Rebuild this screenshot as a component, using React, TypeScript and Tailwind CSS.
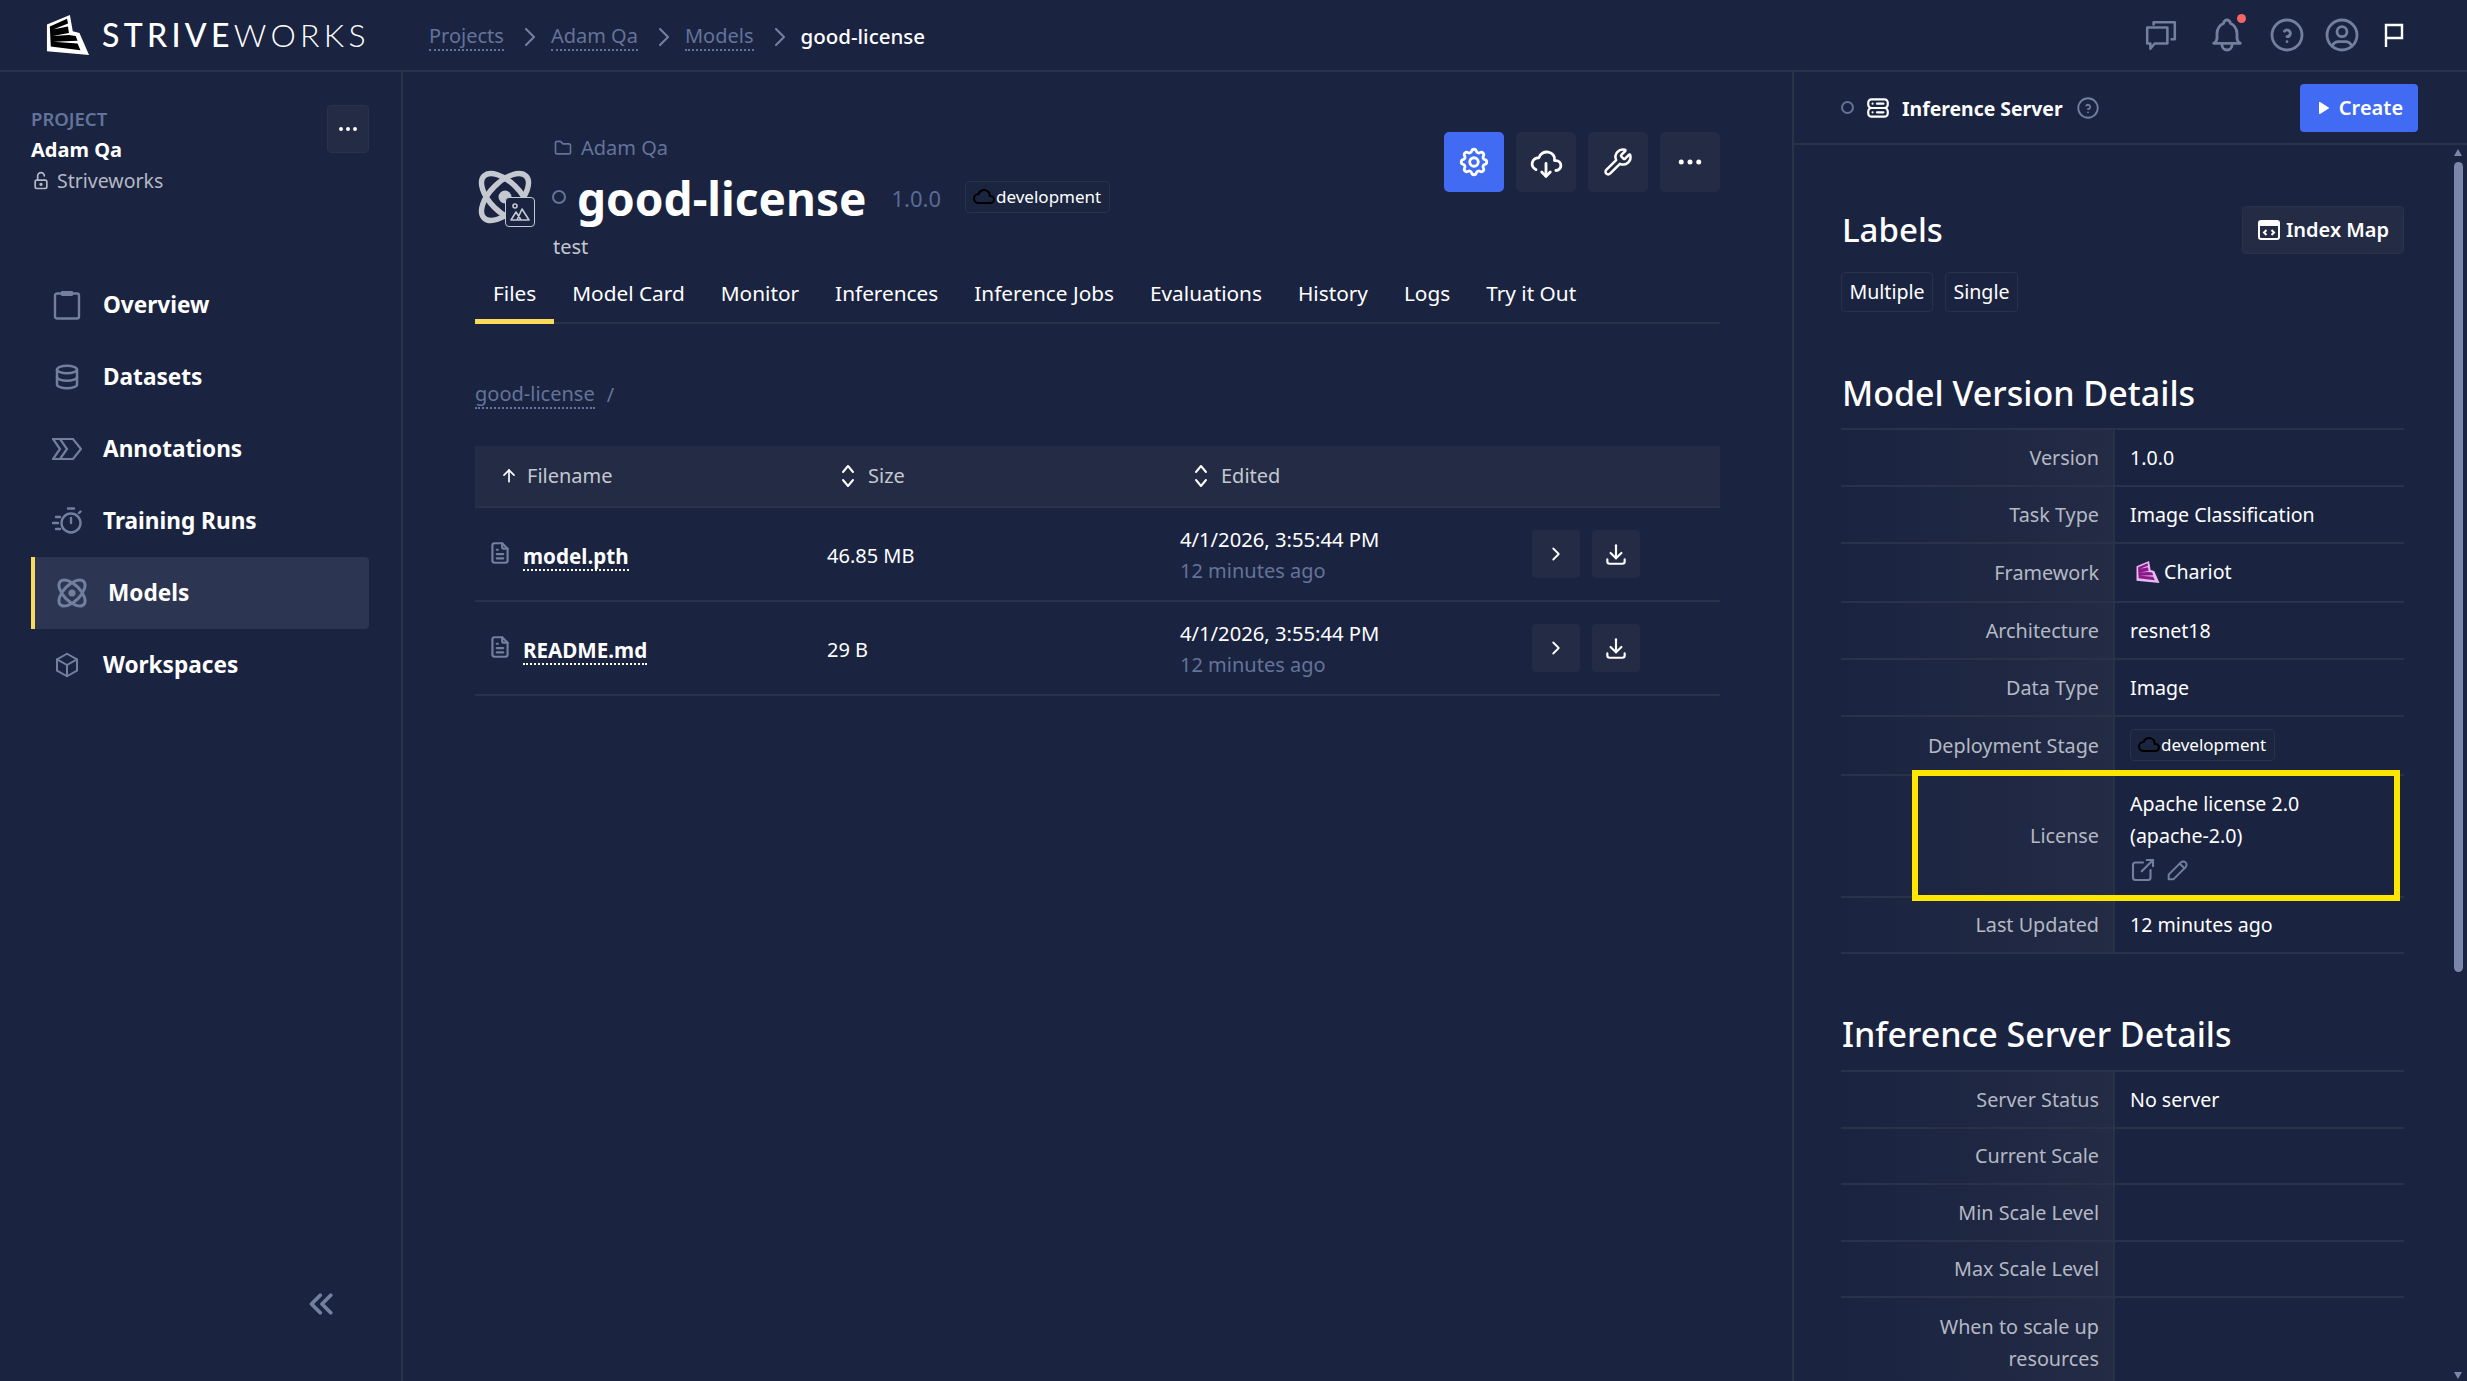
import {
  TbBell,
  TbBox,
  TbChevronRight,
  TbChevronsLeft,
  TbCloud,
  TbCloudDownload,
  TbDatabase,
  TbDots,
  TbDownload,
  TbExternalLink,
  TbFileText,
  TbFolder,
  TbHelpCircle,
  TbLockOpen,
  TbPencil,
  TbPlayerPlayFilled,
  TbServer2,
  TbSettings,
  TbUserCircle,
  TbArrowUp,
} from "react-icons/tb"
import { Wrench } from "lucide-react"
import type { ReactNode } from "react"

function Logo({ outer, dark, size }: { outer: string; dark: string; size: number }) {
  return (
    <svg width={size} height={size} viewBox="0 0 46 44" className="shrink-0">
      <path d="M1 11 25 1l3 17 7 2 10 23L1 39z" fill={outer} />
      <path d="M4 13 22 5l1 5-15 6 15-3 1 7-17 3 17-1 7 1 2 5-25 1 25 2 3 7-31-4z" fill={dark} />
    </svg>
  )
}

function AtomIcon({ size, color, stroke }: { size: number; color: string; stroke: number }) {
  return (
    <svg width={size} height={size} viewBox="2 2 20 20" fill="none" stroke={color} strokeWidth={stroke} className="block">
      <ellipse cx="12" cy="12" rx="11" ry="5.5" transform="rotate(45 12 12)" />
      <ellipse cx="12" cy="12" rx="11" ry="5.5" transform="rotate(-45 12 12)" />
      <circle cx="12" cy="12" r="2.4" fill={color} stroke="none" />
    </svg>
  )
}

const ic = "#737f9f"

const OverviewIcon = () => (
  <svg width="30" height="30" viewBox="0 0 30 30" fill="none" stroke={ic} strokeWidth="2.4">
    <rect x="3" y="3.5" width="24" height="25" rx="2" />
    <rect x="9" y="1" width="12" height="5" rx="1" fill={ic} stroke="none" />
  </svg>
)

const AnnotationsIcon = () => (
  <svg width="30" height="24" viewBox="0 0 30 24" fill="none" stroke={ic} strokeWidth="2.2">
    <path d="M1 2h20l8 10-8 10H1l7-10z" />
    <path d="M8 2l7 10-7 10" />
  </svg>
)

const TrainingIcon = () => (
  <svg width="30" height="28" viewBox="0 0 30 28" fill="none" stroke={ic} strokeWidth="2.4" strokeLinecap="round">
    <circle cx="19" cy="16" r="9.5" />
    <path d="M19 11v5M16 1.5h6M27 6l1.5-1.5M4 10h4M1 16h5M4 22h4" />
  </svg>
)

const MessagesIcon = () => (
  <svg width="34" height="34" viewBox="0 0 32 32" fill="none" stroke={ic} strokeWidth="2.4" strokeLinejoin="round">
    <path d="M9 7V4h20v16h-4" />
    <path d="M3 9h19v15H10l-4 5v-5H3z" />
  </svg>
)

const FlagIcon = () => (
  <svg width="20" height="26" viewBox="0 0 20 26" fill="none" stroke="#ffffff" strokeWidth="2.4">
    <path d="M2 25V3h16v13H2" />
  </svg>
)

const IndexIcon = () => (
  <svg width="24" height="24" viewBox="0 0 24 24" fill="none" stroke="#ffffff" strokeWidth="2">
    <rect x="2" y="3" width="20" height="18" rx="2" />
    <path d="M2 6h20" strokeWidth="4" />
    <path d="M9.5 12l-2.5 2.5 2.5 2.5M14.5 12l2.5 2.5-2.5 2.5" />
  </svg>
)

const SortIcon = () => (
  <svg width="16" height="24" viewBox="0 0 16 24" fill="none" stroke="#ffffff" strokeWidth="2" strokeLinecap="round" strokeLinejoin="round">
    <path d="M3 8l5-6 5 6M3 16l5 6 5-6" />
  </svg>
)

const MountainIcon = () => (
  <svg width="22" height="22" viewBox="0 0 22 22" fill="none" stroke="#c4c8d0" strokeWidth="1.6" strokeLinejoin="round">
    <circle cx="6" cy="5" r="2" />
    <path d="M2 19l5-8 5 8zM8 19l5-11 7 11z" />
  </svg>
)

const nav = [
  { name: "Overview", icon: <OverviewIcon /> },
  { name: "Datasets", icon: <TbDatabase size={34} color={ic} /> },
  { name: "Annotations", icon: <AnnotationsIcon /> },
  { name: "Training Runs", icon: <TrainingIcon /> },
  { name: "Models", icon: <AtomIcon size={32} color={ic} stroke={2} />, active: true },
  { name: "Workspaces", icon: <TbBox size={42} color={ic} strokeWidth={1.6} /> },
]

const tabs = ["Files", "Model Card", "Monitor", "Inferences", "Inference Jobs", "Evaluations", "History", "Logs", "Try it Out"]

const files = [
  { name: "model.pth", size: "46.85 MB" },
  { name: "README.md", size: "29 B" },
]

function Crumb({ children }: { children: ReactNode }) {
  return <a className="text-[#64739a] border-b-2 border-dotted border-[#64739a] leading-[26px]">{children}</a>
}

function Sep() {
  return <TbChevronRight size={32} color={ic} strokeWidth={1.6} className="ml-[10px] mr-[5px]" />
}

function Chip({ className }: { className?: string }) {
  return (
    <span className={"inline-flex items-center rounded-[4px] border border-[#2a3248] bg-[#1c2540] text-white text-[17px] " + className}>
      <TbCloud size={24} color="#000000" className="-ml-[2px]" />
      development
    </span>
  )
}

function DetailRow({ label, height, children }: { label: string; height: string; children?: ReactNode }) {
  return (
    <div className={"flex border-b-2 border-[#2a3248] " + height}>
      <div className="w-[274px] shrink-0 flex items-center justify-end text-right pr-[14px] text-[#b4b9c4] text-[19.8px] border-r-2 border-[#2a3248] bg-linear-to-r from-transparent to-[#232b45] leading-[32px]">
        <span className="w-[220px]">{label}</span>
      </div>
      <div className="flex-1 flex items-center pl-[15px] text-white text-[19.6px] leading-[32px]">{children}</div>
    </div>
  )
}

export default function App() {
  return (
    <div className="h-screen overflow-hidden bg-[#1a2340] text-white flex flex-col font-['Noto_Sans',sans-serif] text-[20px]">
      {/* Top bar */}
      <header className="h-[72px] shrink-0 border-b-2 border-[#2a3248] flex items-center pl-[46px] pr-[63px]">
        <Logo outer="#ffffff" dark="#000000" size={44} />
        <div className="ml-[12px] w-[263px] font-['Lato',sans-serif] text-[32px] tracking-[4.3px] leading-none whitespace-nowrap">
          <span className="font-medium">STRIVE</span>
          <span className="font-light">WORKS</span>
        </div>
        <nav className="ml-[64px] flex items-center text-[20px] pt-[3px]">
          <Crumb>Projects</Crumb>
          <Sep />
          <Crumb>Adam Qa</Crumb>
          <Sep />
          <Crumb>Models</Crumb>
          <Sep />
          <span className="font-medium text-[20.5px]">good-license</span>
        </nav>
        <div className="ml-auto flex items-center gap-[15px]">
          <MessagesIcon />
          <span className="relative ml-[14px] mr-[5px]">
            <TbBell size={40} color={ic} strokeWidth={1.7} />
            <span className="absolute right-[1px] top-[-1px] w-[9px] h-[9px] rounded-full bg-[#f56565]" />
          </span>
          <TbHelpCircle size={40} color={ic} strokeWidth={1.7} />
          <TbUserCircle size={40} color={ic} strokeWidth={1.7} />
          <span className="ml-[7px]">
            <FlagIcon />
          </span>
        </div>
      </header>

      <div className="flex flex-1 min-h-0">
        {/* Sidebar */}
        <aside className="w-[403px] shrink-0 border-r-2 border-[#2a3248] flex flex-col pl-[31px] pr-[32px]">
          <div className="flex justify-between pt-[33px] h-[197px]">
            <div>
              <div className="text-[#64739a] text-[18.5px] font-semibold leading-[28px]">PROJECT</div>
              <div className="font-bold text-[20px] leading-[34px]">Adam Qa</div>
              <div className="flex items-center gap-[6px] text-[#b4b9c4] text-[19.5px] leading-[28px]">
                <TbLockOpen size={20} color="#b4b9c4" />
                Striveworks
              </div>
            </div>
            <button className="w-[42px] h-[48px] rounded-[4px] bg-[#232b45] border border-[#2a3248] flex items-center justify-center">
              <TbDots size={24} color="#ffffff" />
            </button>
          </div>
          <div>
            {nav.map((item) => (
              <div
                key={item.name}
                className={
                  item.active
                    ? "h-[72px] flex items-center pl-[22px] border-l-4 border-[#f9db5c] bg-[#2c3652] rounded-r-[4px] font-bold text-[22.6px]"
                    : "h-[72px] flex items-center pl-[21px] font-bold text-[22.6px]"
                }
              >
                <span className="w-[30px] flex justify-center">{item.icon}</span>
                <span className="ml-[21px] mb-[1px]">{item.name}</span>
              </div>
            ))}
          </div>
          <div className="mt-auto flex justify-end pr-[26px] pb-[56px]">
            <TbChevronsLeft size={42} color={ic} strokeWidth={2.2} />
          </div>
        </aside>

        {/* Main */}
        <main className="flex-1 min-w-0 pl-[72px] pr-[72px] pt-[60px]">
          <div className="flex justify-between">
            <div className="flex items-center">
              <div className="relative w-[60px] h-[60px] ml-[3px] mr-[15px]">
                <div className="pt-[3px]">
                  <AtomIcon size={54} color="#c4c8d0" stroke={2} />
                </div>
                <span className="absolute left-[27px] top-[30px] w-[30px] h-[30px] rounded-[4px] border border-[#c4c8d0] bg-[#1a2340] flex items-center justify-center">
                  <MountainIcon />
                </span>
              </div>
              <div>
                <div className="h-[32px] flex items-center gap-[8px] text-[#64739a]">
                  <TbFolder size={20} color="#64739a" />
                  Adam Qa
                </div>
                <div className="h-[68px] flex items-center">
                  <span className="w-[14px] h-[14px] rounded-full border-2 border-[#64739a] mr-[10px] ml-[-1px] mb-[2px]" />
                  <span className="font-bold text-[46px] leading-none ml-[1px]">good-license</span>
                  <span className="ml-[25px] text-[#5a6a94] text-[22px]">1.0.0</span>
                  <Chip className="ml-[24px] h-[32px] px-[8px] mb-[2px]" />
                </div>
                <div className="h-[30px] flex items-center text-[#c4c8d0] text-[20px]">test</div>
              </div>
            </div>
            <div className="flex gap-[12px]">
              <button className="w-[60px] h-[60px] rounded-[5px] bg-[#416bf2] flex items-center justify-center">
                <TbSettings size={34} color="#ffffff" />
              </button>
              <button className="w-[60px] h-[60px] rounded-[5px] bg-[#232b45] flex items-center justify-center">
                <TbCloudDownload size={34} color="#ffffff" />
              </button>
              <button className="w-[60px] h-[60px] rounded-[5px] bg-[#232b45] flex items-center justify-center">
                <Wrench size={30} color="#ffffff" />
              </button>
              <button className="w-[60px] h-[60px] rounded-[5px] bg-[#232b45] flex items-center justify-center">
                <TbDots size={30} color="#ffffff" />
              </button>
            </div>
          </div>

          <div className="h-[62px] flex border-b-2 border-[#2a3248] text-[20.8px]">
            {tabs.map((t, i) => (
              <div
                key={t}
                className={
                  i === 0
                    ? "px-[18px] pt-[16px] border-b-[5px] border-[#f9db5c] -mb-[2px]"
                    : "px-[18px] pt-[16px]"
                }
              >
                {t}
              </div>
            ))}
          </div>

          <div className="mt-[56px] flex items-center gap-[12px] text-[#64739a]">
            <span className="border-b-2 border-dotted border-[#64739a] leading-[26px]">good-license</span>
            <span>/</span>
          </div>

          <div className="mt-[36px]">
            <div className="h-[62px] grid grid-cols-[352px_353px_352px_1fr] items-center bg-[#232b45] border-b-2 border-[#2a3248] text-[#c4c8d0]">
              <div className="flex items-center gap-[8px] pl-[24px]">
                <TbArrowUp size={20} color="#ffffff" />
                Filename
              </div>
              <div className="flex items-center gap-[12px] pl-[13px]">
                <SortIcon />
                Size
              </div>
              <div className="flex items-center gap-[12px] pl-[13px]">
                <SortIcon />
                Edited
              </div>
            </div>
            {files.map((f) => (
              <div key={f.name} className="h-[94px] grid grid-cols-[352px_353px_352px_1fr] items-center border-b-2 border-[#2a3248]">
                <div className="flex items-center gap-[10px] pl-[12px]">
                  <TbFileText size={26} color={ic} className="mb-[2px]" />
                  <span className="font-bold text-[20.6px] border-b-2 border-dotted border-white leading-[26px] mt-[5px]">{f.name}</span>
                </div>
                <div className="pt-[3px]">{f.size}</div>
                <div className="leading-[32px] text-[20.2px] pt-[1px]">
                  <div>4/1/2026, 3:55:44 PM</div>
                  <div className="text-[#64739a] text-[20px]">12 minutes ago</div>
                </div>
                <div className="flex gap-[12px]">
                  <button className="w-[48px] h-[48px] rounded-[4px] bg-[#232b45] flex items-center justify-center">
                    <TbChevronRight size={22} color="#ffffff" />
                  </button>
                  <button className="w-[48px] h-[48px] rounded-[4px] bg-[#232b45] flex items-center justify-center">
                    <TbDownload size={26} color="#ffffff" />
                  </button>
                </div>
              </div>
            ))}
          </div>
        </main>

        {/* Right panel */}
        <section className="w-[675px] shrink-0 border-l-2 border-[#2a3248] flex flex-col relative">
          <div className="h-[73px] shrink-0 border-b-2 border-[#2a3248] flex items-center pl-[47px] pr-[49px]">
            <span className="w-[13px] h-[13px] rounded-full border-2 border-[#64739a] mr-[11px]" />
            <TbServer2 size={26} color="#ffffff" />
            <span className="ml-[11px] font-bold text-[19.4px] pt-[2px]">Inference Server</span>
            <TbHelpCircle size={26} color={ic} strokeWidth={1.7} className="ml-[12px]" />
            <button className="ml-auto w-[118px] h-[48px] rounded-[4px] bg-[#416bf2] flex items-center justify-center gap-[8px] font-semibold">
              <TbPlayerPlayFilled size={16} color="#ffffff" />
              Create
            </button>
          </div>

          <div className="flex-1 min-h-0 flex">
            <div className="flex-1 min-w-0 overflow-hidden pl-[47px] pr-[47px]">
              <div className="h-[109px] flex items-end justify-between">
                <h2 className="text-[33px] font-medium leading-[48px] ml-[1px]">Labels</h2>
                <button className="w-[162px] h-[48px] rounded-[4px] bg-[#232b45] border border-[#2a3248] flex items-center justify-center gap-[5px] font-semibold">
                  <IndexIcon />
                  Index Map
                </button>
              </div>
              <div className="flex gap-[12px] mt-[18px] text-[19.6px]">
                <span className="h-[40px] w-[92px] justify-center flex items-center rounded-[4px] border border-[#2a3248]">Multiple</span>
                <span className="h-[40px] w-[73px] justify-center flex items-center rounded-[4px] border border-[#2a3248]">Single</span>
              </div>

              <h2 className="mt-[56px] text-[34px] font-medium leading-[50px] mb-[10px] ml-[1px]">Model Version Details</h2>
              <div className="relative border-t-2 border-[#2a3248]">
                <DetailRow label="Version" height="h-[57px]">1.0.0</DetailRow>
                <DetailRow label="Task Type" height="h-[57px]">Image Classification</DetailRow>
                <DetailRow label="Framework" height="h-[59px]">
                  <span className="flex items-center gap-[4px] ml-[6px] mb-[2px]">
                    <Logo outer="#e9b8f0" dark="#8a1a8a" size={24} />
                    Chariot
                  </span>
                </DetailRow>
                <DetailRow label="Architecture" height="h-[57px]">resnet18</DetailRow>
                <DetailRow label="Data Type" height="h-[57px]">Image</DetailRow>
                <DetailRow label="Deployment Stage" height="h-[59px]">
                  <Chip className="h-[32px] px-[8px] mb-[1px]" />
                </DetailRow>
                <DetailRow label="License" height="h-[122px]">
                  <div className="mb-[3px]">
                    <div>Apache license 2.0</div>
                    <div>(apache-2.0)</div>
                    <div className="flex items-center gap-[6px] h-[24px] mt-[6px]">
                      <TbExternalLink size={30} color={ic} strokeWidth={1.7} className="-ml-[2px]" />
                      <TbPencil size={28} color={ic} strokeWidth={1.7} />
                    </div>
                  </div>
                </DetailRow>
                <DetailRow label="Last Updated" height="h-[56px]">12 minutes ago</DetailRow>
                {/* highlight box drawn over the license row */}
                <div className="absolute left-[71px] top-[340px] w-[488px] h-[131px] border-[6px] border-[#ffe600] pointer-events-none" />
              </div>

              <h2 className="mt-[55px] text-[34px] font-medium leading-[50px] mb-[11px] ml-[1px]">Inference Server Details</h2>
              <div className="border-t-2 border-[#2a3248]">
                <DetailRow label="Server Status" height="h-[57px]">No server</DetailRow>
                <DetailRow label="Current Scale" height="h-[56px]" />
                <DetailRow label="Min Scale Level" height="h-[57px]" />
                <DetailRow label="Max Scale Level" height="h-[56px]" />
                <DetailRow label="When to scale up resources" height="h-[92px]" />
              </div>
            </div>
            {/* scrollbar */}
            <div className="w-[14px] mr-[2px] shrink-0 flex flex-col items-center pt-[4px] pb-[2px]">
              <span className="w-0 h-0 border-x-[4px] border-x-transparent border-b-[7px] border-b-[#7a86aa]" />
              <span className="mt-[6px] w-[9px] h-[810px] rounded-full bg-[#7a86aa]" />
              <span className="mt-auto w-0 h-0 border-x-[4px] border-x-transparent border-t-[7px] border-t-[#7a86aa]" />
            </div>
          </div>
        </section>
      </div>
    </div>
  )
}
